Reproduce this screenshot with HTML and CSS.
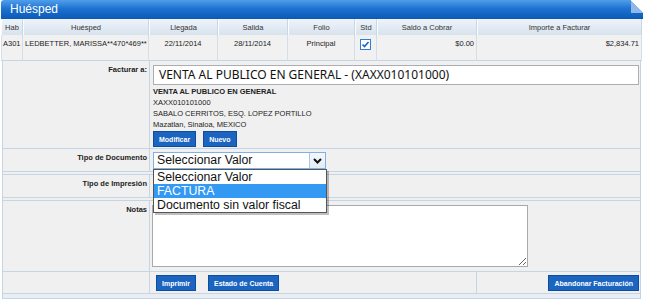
FILE: index.html
```html
<!DOCTYPE html>
<html lang="es">
<head>
  <meta charset="UTF-8" />
  <title>Huésped – Facturación</title>
  <link rel="stylesheet" href="styles.css">
</head>
<body>

  <div class="panel">
    <div class="panel-title">Huésped</div>

    <table class="grid">
      <colgroup>
        <col style="width:22px">
        <col style="width:126px">
        <col style="width:69px">
        <col style="width:70px">
        <col style="width:67px">
        <col style="width:22px">
        <col style="width:100px">
        <col style="width:165px">
      </colgroup>
      <thead>
        <tr>
          <th>Hab</th>
          <th>Huésped</th>
          <th>Llegada</th>
          <th>Salida</th>
          <th>Folio</th>
          <th>Std</th>
          <th>Saldo a Cobrar</th>
          <th>Importe a Facturar</th>
        </tr>
      </thead>
      <tbody>
        <tr>
          <td>A301</td>
          <td class="left">LEDBETTER, MARISSA**470*469**</td>
          <td>22/11/2014</td>
          <td>28/11/2014</td>
          <td>Principal</td>
          <td>
            <svg class="check" width="11" height="11" viewBox="0 0 11 11">
              <rect x="0.5" y="0.5" width="10" height="10" fill="#fff" stroke="#2f7fd8"/>
              <path d="M2.5 5.5 L4.5 7.5 L8.5 3" fill="none" stroke="#1a63c4" stroke-width="1.6"/>
            </svg>
          </td>
          <td class="num">$0.00</td>
          <td class="num">$2,834.71</td>
        </tr>
      </tbody>
    </table>

    <div class="form">
      <div class="frow">
        <div class="flabel">Facturar a:</div>
        <div class="fval bill">
          <div class="textbox">VENTA AL PUBLICO EN GENERAL - (XAXX010101000)</div>
          <div class="client">
            <b>VENTA AL PUBLICO EN GENERAL</b>
            <div>XAXX010101000</div>
            <div>SABALO CERRITOS, ESQ. LOPEZ PORTILLO</div>
            <div>Mazatlan, Sinaloa, MEXICO</div>
          </div>
          <div class="btns">
            <button class="btn">Modificar</button>
            <button class="btn">Nuevo</button>
          </div>
        </div>
      </div>

      <div class="frow double short">
        <div class="flabel">Tipo de Documento</div>
        <div class="fval">
          <div class="select">
            <span class="select-text">Seleccionar Valor</span>
            <span class="select-arrow">
              <svg width="9" height="6" viewBox="0 0 9 6"><path d="M1 1 L4.5 4.5 L8 1" fill="none" stroke="#111" stroke-width="2"/></svg>
            </span>
            <ul class="options">
              <li>Seleccionar Valor</li>
              <li class="active">FACTURA</li>
              <li>Documento sin valor fiscal</li>
            </ul>
          </div>
        </div>
      </div>

      <div class="frow double short">
        <div class="flabel">Tipo de Impresión</div>
        <div class="fval"></div>
      </div>

      <div class="frow">
        <div class="flabel">Notas</div>
        <div class="fval notes">
          <textarea></textarea>
        </div>
      </div>

      <div class="frow actions">
        <div class="flabel"></div>
        <div class="fval">
          <button class="btn">Imprimir</button>
          <button class="btn">Estado de Cuenta</button>
        </div>
        <div class="fval right">
          <button class="btn">Abandonar Facturación</button>
        </div>
      </div>

      <div class="form-foot"></div>
    </div>
  </div>

</body>
</html>
```

FILE: styles.css
```css
:root {
  --line: #c6d5e5;
  --cell: #f1f1f1;
  --blue: #1b64c0;
  --text: #222;
}

* {
  box-sizing: border-box;
  margin: 0;
  padding: 0;
}

body {
  background: #fff;
  font-family: 'Liberation Sans', Arial, sans-serif;
  color: var(--text);
}

.panel {
  width: 642px;
  margin-left: 1px;
}

.panel-title {
  position: relative;
  height: 19px;
  padding-left: 9px;
  line-height: 18px;
  font-size: 12px;
  color: #fff;
  border-radius: 3px 0 0 0;
  background: linear-gradient(#519ee9, #1e72d2 45%, #0b59b5);
}

/* folded corner */
.panel-title::after {
  content: '';
  position: absolute;
  top: 0;
  right: 0;
  width: 12px;
  height: 13px;
  background: linear-gradient(to bottom left, #fff 50%, #8fb9e8 50%);
}

.grid {
  width: 641px;
  table-layout: fixed;
  border-collapse: separate;
  border-spacing: 0;
  font-size: 7.5px;
}

.grid th {
  height: 16px;
  font-weight: normal;
  color: #333;
  background: linear-gradient(#eef3f9, #d8e3ee);
  border-left: 1px solid #fbfcfe;
  border-right: 1px solid #c9d6e4;
  white-space: nowrap;
  overflow: hidden;
}

.grid td {
  height: 26px;
  padding: 4px 2px 0;
  vertical-align: top;
  text-align: center;
  background: var(--cell);
  border-right: 1px solid #d3dee9;
  border-bottom: 1px solid var(--line);
  white-space: nowrap;
  overflow: hidden;
}

.grid td:first-child {
  border-left: 1px solid #d3dee9;
  text-align: left;
  padding-left: 1px;
}

.grid td.left {
  text-align: left;
}

.grid td.num {
  text-align: right;
}

.check {
  display: block;
  margin: 0 auto;
}

.form {
  width: 639px;
  margin-left: 1px;
  border-left: 1px solid var(--line);
  border-right: 1px solid var(--line);
  font-size: 7.5px;
}

.frow {
  display: grid;
  grid-template-columns: 146px 1fr;
  background: #f0f0f0;
  border-bottom: 1px solid var(--line);
}

.frow.double {
  border-bottom: 4px double var(--line);
}

.frow.short {
  height: 26px;
}

.flabel {
  padding: 4px 2px 0 0;
  text-align: right;
  font-weight: bold;
  white-space: nowrap;
}

.fval {
  padding: 3px 0 0 3px;
  border-left: 1px solid var(--line);
}

.bill {
  padding: 4px 1px 1px 3px;
}

.textbox {
  height: 20px;
  padding-left: 5px;
  line-height: 18px;
  background: #fff;
  border: 1px solid #abadb3;
  font-family: 'Noto Sans', sans-serif;
  font-size: 12px;
  color: #111;
  white-space: nowrap;
}

.client {
  margin-top: 1px;
  line-height: 11px;
}

.client b {
  display: block;
}

.btns {
  display: flex;
  gap: 7px;
  margin-top: 1px;
}

.btn {
  height: 16px;
  padding: 0 5px;
  font-family: 'Liberation Sans', Arial, sans-serif;
  font-size: 7px;
  font-weight: bold;
  color: #fff;
  background: var(--blue);
  border: 1px solid #0d4d9e;
  white-space: nowrap;
}

.select {
  position: relative;
  display: flex;
  width: 173px;
  height: 17px;
  background: #fff;
  border: 1px solid #7eb2e6;
  font-family: 'Liberation Sans', Arial, sans-serif;
  font-size: 12.3px;
  color: #111;
}

.select-text {
  flex: 1;
  padding-left: 3px;
  line-height: 15px;
}

.select-arrow {
  display: flex;
  align-items: center;
  justify-content: center;
  width: 16px;
  border-left: 1px solid #a8c8ea;
  background: linear-gradient(#f4f8fc, #e2ecf6);
}

.options {
  position: absolute;
  top: 16px;
  left: -1px;
  width: 174px;
  list-style: none;
  background: #fff;
  border: 1px solid #555;
  box-shadow: 2px 2px 0 rgba(0, 0, 0, 0.25);
  z-index: 2;
}

.options li {
  height: 14px;
  padding-left: 3px;
  line-height: 14px;
}

.options li.active {
  background: #3399f3;
  color: #fff;
}

.notes {
  height: 70px;
  padding-top: 4px;
  padding-left: 2px;
}

.notes textarea {
  display: block;
  width: 376px;
  height: 62px;
  border: 1px solid #a9a9a9;
  background: #fff;
}

.actions {
  grid-template-columns: 146px 327px 1fr;
  height: 22px;
}

.actions .fval {
  display: flex;
  gap: 12px;
  padding: 3px 0 0 6px;
}

.actions .fval.right {
  justify-content: flex-end;
  padding-right: 1px;
}

.form-foot {
  height: 5px;
  background: #e9eef4;
  border-bottom: 1px solid var(--line);
}
```
